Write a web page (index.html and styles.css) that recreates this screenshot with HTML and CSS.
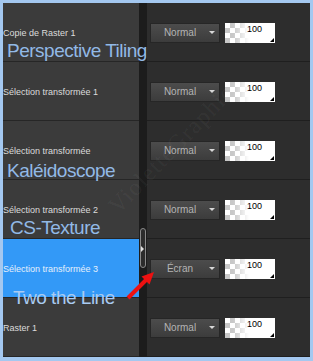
FILE: index.html
```html
<!DOCTYPE html>
<html lang="fr">
<head>
    <meta charset="UTF-8">
    <title>Calques</title>
    <link rel="stylesheet" href="styles.css">
</head>
<body>

<div class="frame">
    <div class="panel">
        <!-- Layer names -->
        <div class="names">
            <div class="name">Copie de Raster 1</div>
            <div class="name">Sélection transformée 1</div>
            <div class="name">Sélection transformée</div>
            <div class="name">Sélection transformée 2</div>
            <div class="name selected">Sélection transformée 3</div>
            <div class="name">Raster 1</div>
        </div>

        <div class="strip">
            <div class="thumb"><span class="thumb-arrow"></span></div>
        </div>

        <!-- Blend mode + opacity -->
        <div class="props">
            <div class="prop">
                <div class="blend"><span class="blend-label">Normal</span><span class="caret"></span></div>
                <div class="opacity">100</div>
            </div>
            <div class="prop">
                <div class="blend"><span class="blend-label">Normal</span><span class="caret"></span></div>
                <div class="opacity">100</div>
            </div>
            <div class="prop">
                <div class="blend"><span class="blend-label">Normal</span><span class="caret"></span></div>
                <div class="opacity">100</div>
            </div>
            <div class="prop">
                <div class="blend"><span class="blend-label">Normal</span><span class="caret"></span></div>
                <div class="opacity">100</div>
            </div>
            <div class="prop">
                <div class="blend"><span class="blend-label">Écran</span><span class="caret"></span></div>
                <div class="opacity">100</div>
            </div>
            <div class="prop">
                <div class="blend"><span class="blend-label">Normal</span><span class="caret"></span></div>
                <div class="opacity">100</div>
            </div>
        </div>
    </div>

    <!-- Annotations over the screenshot -->
    <div class="watermark">VioletteGraphic</div>
    <div class="note note-tiling">Perspective Tiling</div>
    <div class="note note-kaleido">Kaléidoscope</div>
    <div class="note note-texture">CS-Texture</div>
    <div class="note note-line">Two the Line</div>

    <svg class="arrow" width="34" height="34" viewBox="0 0 34 34">
        <line x1="4" y1="30" x2="22" y2="12" stroke="#ee1111" stroke-width="4"/>
        <polygon points="30,4 25.5,16.5 17.5,8.5" fill="#ee1111"/>
    </svg>
</div>

</body>
</html>
```

FILE: styles.css
```css
body {
    margin: 0;
    padding: 0;
    font-family: "Liberation Sans", Arial, sans-serif;
}

.frame {
    position: relative;
    width: 313px;
    height: 361px;
    box-sizing: border-box;
    padding: 3px 3px 4px 3px;
    background-color: #a4c8f0;
    overflow: hidden;
}

.panel {
    display: flex;
    height: 354px;
}

.names {
    width: 136px;
    background-color: #3b3b3b;
    overflow: hidden;
}

.name {
    height: 59px;
    box-sizing: border-box;
    border-bottom: 1px solid #262626;
    display: flex;
    align-items: center;
    padding-top: 1px;
    font-size: 9px;
    color: #dcdcdc;
    white-space: nowrap;
}

.name.selected {
    background-color: #3399f7;
    color: #e6f0fb;
}

.strip {
    position: relative;
    width: 8px;
    background-color: #1c1c1c;
}

.thumb {
    position: absolute;
    left: 1px;
    top: 225px;
    width: 4px;
    height: 38px;
    border: 1px solid #8a8a8a;
    border-radius: 3px;
    background-color: #2c2c2c;
}

.thumb-arrow {
    position: absolute;
    left: 0;
    top: 17px;
    border-top: 3px solid transparent;
    border-bottom: 3px solid transparent;
    border-left: 3px solid #e0e0e0;
}

.props {
    flex: 1;
    background-color: #2d2d2d;
}

.prop {
    height: 59px;
    box-sizing: border-box;
    border-bottom: 1px solid #1f1f1f;
    display: flex;
    align-items: center;
    gap: 5px;
    padding-left: 3px;
    padding-top: 1px;
}

.blend {
    width: 70px;
    height: 20px;
    box-sizing: border-box;
    display: flex;
    align-items: center;
    background: linear-gradient(#4c4c4c, #3c3c3c);
    border: 1px solid #262626;
}

.blend-label {
    flex: 1;
    text-align: center;
    font-size: 10px;
    color: #b4b4b4;
}

.caret {
    margin-right: 4px;
    border-left: 3px solid transparent;
    border-right: 3px solid transparent;
    border-top: 3px solid #d8d8d8;
}

.opacity {
    position: relative;
    width: 50px;
    height: 20px;
    box-sizing: border-box;
    padding: 1px 0 0 22px;
    font-size: 9px;
    line-height: 10px;
    color: #000;
    background:
        linear-gradient(to right, rgba(255, 255, 255, 0) 8px, #fff 24px),
        repeating-conic-gradient(#c8c8c8 0 25%, #fff 0 50%) 0 0 / 10px 10px;
}

.opacity::after {
    content: "";
    position: absolute;
    right: 1px;
    bottom: 1px;
    border-left: 4px solid transparent;
    border-bottom: 4px solid #000;
}

.note {
    position: absolute;
    font-family: "Liberation Sans", Arial, sans-serif;
    font-size: 19px;
    line-height: 19px;
    letter-spacing: -0.5px;
    color: #92b9e6;
    white-space: nowrap;
}

.note-tiling { left: 7px; top: 41px; }
.note-kaleido { left: 7px; top: 161px; }
.note-texture { left: 10px; top: 218px; }
.note-line { left: 13px; top: 288px; color: #a9cbf2; }

.watermark {
    position: absolute;
    left: 71px;
    top: 136px;
    width: 200px;
    text-align: center;
    font-family: "Liberation Serif", "Times New Roman", serif;
    font-size: 24px;
    line-height: 26px;
    letter-spacing: 1px;
    color: rgba(255, 255, 255, 0.05);
    transform: rotate(-46deg);
}

.arrow {
    position: absolute;
    left: 124px;
    top: 268px;
}
```
